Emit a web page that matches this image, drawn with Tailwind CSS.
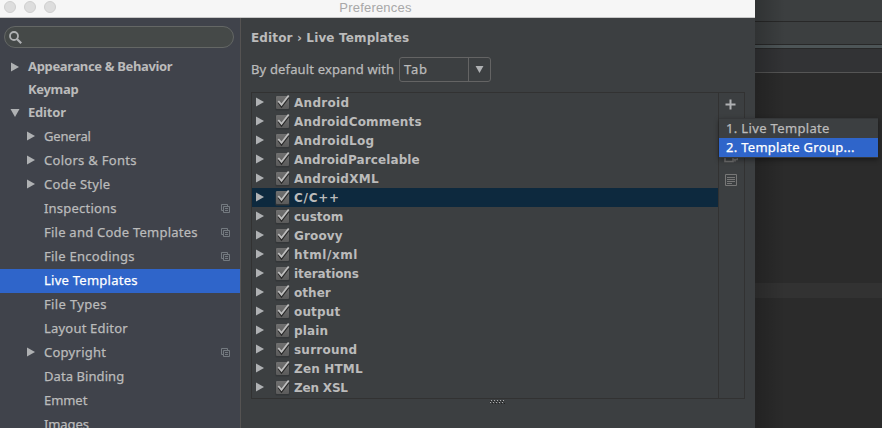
<!DOCTYPE html>
<html lang="en"><head><meta charset="utf-8"><title>Preferences</title>
<script src="https://cdn.jsdelivr.net/npm/@tailwindcss/browser@4"></script></head>
<body class="w-[882px] h-[428px] overflow-hidden bg-[#2b2b2b] text-[#bbbbbb] text-[13px] font-['Noto_Sans','Open_Sans',sans-serif]">
<svg class="absolute w-0 h-0">
<symbol id="right" viewBox="0 0 8 10"><path d="M0 .5 8 5 0 9.5Z" fill="#afb1b3"/></symbol>
<symbol id="down" viewBox="0 0 10 8"><path d="M.5 0H9.5L5 8Z" fill="#afb1b3"/></symbol>
<symbol id="copy" viewBox="0 0 9 9"><path d="M2 6.5H.5V.5H6.5V2M2.5 2.5H8.5V8.5H2.5ZM4 4.5H7M4 6.5H7" fill="none" stroke="#747a80"/></symbol>
<linearGradient id="box" x2="0" y2="1"><stop stop-color="#707070"/><stop offset="1" stop-color="#5b5b5b"/></linearGradient>
<symbol id="check" viewBox="0 0 16 17"><rect x=".5" y="2.5" width="14" height="14" rx="1" fill="#333638"/><rect x="1" y="2" width="13" height="13" rx="1" fill="url(#box)"/><path d="M3.5 8.5 6.5 12.5 13.5 3.5" fill="none" stroke="#292929" stroke-width="2"/><path d="M3.3 7 6.5 10.8 13.7 1.5" fill="none" stroke="#bebebe" stroke-width="1.8"/></symbol>
</svg>
<main class="relative flex h-[428px]">
<section class="w-[755px] h-[428px] shrink-0 bg-[#3c3f41] flex flex-col">
<header class="relative h-[18px] shrink-0 bg-[#f6f6f6] border-b border-[#c8c8c8] flex justify-center">
<div class="absolute left-1 top-px flex gap-2"><i class="size-3 rounded-full bg-[#dddddd] border border-[#cfcfcf]"></i><i class="size-3 rounded-full bg-[#dddddd] border border-[#cfcfcf]"></i><i class="size-3 rounded-full bg-[#dddddd] border border-[#cfcfcf]"></i></div>
<h1 class="font-['Liberation_Sans',sans-serif] text-[13px] leading-[15px] tracking-[0.2px] text-[#a8a8a8] pr-1">Preferences</h1></header>
<div class="flex flex-1 min-h-0">
<nav class="w-[241px] shrink-0 bg-[#40434b] border-r border-[#555352] overflow-hidden">
<div class="mt-2 ml-1 w-[230px] h-[22px] rounded-full border border-[#646765] bg-[#454948] flex items-center pl-1"><svg class="w-[13px] h-[13px]" viewBox="0 0 13 13" fill="none" stroke="#afb1b3"><circle cx="5" cy="5" r="4" stroke-width="1.8"/><path d="m8 8 4.2 4.2" stroke-width="2.2"/></svg></div>
<div id="side" class="mt-2"></div></nav>
<div class="flex-1 pl-[10px] flex flex-col">
<h2 class="h-5 mt-[10px] leading-5 font-bold text-[12px] font-['DejaVu_Sans',sans-serif] whitespace-pre"><span class="fit" data-w="157.5">Editor › Live Templates</span></h2>
<div class="flex h-[25px] mt-[9px] items-center"><span class="w-[148px] whitespace-nowrap [-webkit-text-stroke:0.25px]"><span class="fit" data-w="142.5">By default expand with</span></span>
<div class="w-[92px] h-[25px] border border-[#646464] rounded-[3px] flex items-center"><span class="w-[69px] h-full pl-1 leading-[23px] border-r border-[#646464] [-webkit-text-stroke:0.25px]"><span class="fit" data-w="23">Tab</span></span><svg class="ml-[6px] w-[9px] h-[7px]"><use href="#down"/></svg></div></div>
<div class="mt-[10px] w-[494px] h-[307px] border border-[#323232] flex"><div id="list" class="w-[466px]"></div>
<aside class="w-[26px] border-l border-[#323232] flex flex-col items-start pl-[6px]"><svg class="mt-[6px] w-[11px] h-[11px]" viewBox="0 0 11 11"><path d="M5.5 .5V10.5M.5 5.5H10.5" stroke="#afb1b3" stroke-width="2"/></svg>
<svg class="mt-[42px] -ml-px w-[14px] h-[11px]" viewBox="0 0 14 11"><path d="M1 2V9.5H9V6M9 7.5H13.5V2M11 7.5v2" fill="none" stroke="#6e6e6e" stroke-width="1.6"/></svg>
<svg class="mt-[11px] w-[12px] h-[12px]" viewBox="0 0 12 12"><path d="M.5 .5H11.5V11.5H.5ZM2 3.5H10M2 5.5H10M2 7.5H10M2 9.5H7" fill="none" stroke="#777"/></svg></aside></div>
<svg class="ml-[239px] mt-[1px] w-[15px] h-[4px]" viewBox="0 0 15 4"><path d="M1 .5H15M0 2.5H14" stroke="#aaa" stroke-dasharray="1 2"/><path d="M0 1.5H15M2 3.5H15" stroke="#222" stroke-dasharray="1 2"/></svg>
</div></div></section>
<section class="flex-1 flex flex-col">
<div class="h-[22px] bg-[#3c3f40] border-b border-[#282828]"></div><div class="h-[23px] bg-[#3c3f40] border-b border-[#282828]"></div><div class="h-[4px] bg-[#4d5557] border-b border-[#282828]"></div><div class="h-[24px] bg-[#323335] border-b border-[#555555]"></div><div class="h-[210px]"></div><div class="h-[15px] bg-[#323232]"></div>
</section>
<div class="absolute left-[755px] top-0 w-[30px] h-[428px] bg-linear-to-r from-black/20 to-transparent"></div>
<div class="absolute left-[719px] top-[118px] w-[159px] h-[40px] bg-[#3c3f41] border-t border-b border-[#353739] shadow-[0_2px_5px_rgba(0,0,0,0.4)] [-webkit-text-stroke:0.25px]"><div class="h-[19px] leading-[19px] pl-[7px]"><span class="fit" data-w="103">1. Live Template</span></div><div class="h-[19px] leading-[19px] pl-[7px] bg-[#2f65ca] text-white"><span class="fit" data-w="128">2. Template Group...</span></div></div>
</main>
<script>
const side=[["Appearance & Behavior",0,"right",143.5],["Keymap",0,"",49.5],["Editor",0,"down",37],["General",1,"right",46],["Colors & Fonts",1,"right",92],["Code Style",1,"right",65.5],["Inspections",1,"",72,1],["File and Code Templates",1,"",153,1],["File Encodings",1,"",90,1],["Live Templates",1,"",93,0,1],["File Types",1,"",62],["Layout Editor",1,"",83],["Copyright",1,"right",61.5,1],["Data Binding",1,"",79.5],["Emmet",1,"",42.5],["Images",1,"",44]];
document.getElementById('side').innerHTML=side.map(([t,l,a,w,c,s])=>`<div class="${l?'h-6 pl-[26px] [-webkit-text-stroke:0.25px]':'h-[23px] pl-[10px] font-bold text-[13px]'} flex items-center pr-[10px] ${s?'bg-[#2f65ca] text-white':''}"><span class="w-[18px] shrink-0">${a?`<svg class="${a=='down'?'w-[10px] h-[8px]':'w-[8px] h-[10px] ml-px'} mb-[2px]"><use href="#${a}"/></svg>`:''}</span><span class="flex-1 pb-px whitespace-nowrap"><span class="fit" data-w="${w}">${t.replace('&','&amp;')}</span></span>${c?'<svg class="w-[9px] h-[9px] mb-px"><use href="#copy"/></svg>':''}</div>`).join('');
const list=[["Android",54.5],["AndroidComments",127],["AndroidLog",79.5],["AndroidParcelable",125],["AndroidXML",84],["C/C++",45],["custom",48.5],["Groovy",48],["html/xml",63],["iterations",64],["other",36],["output",45.5],["plain",33.5],["surround",62.5],["Zen HTML",68],["Zen XSL",53]];
document.getElementById('list').innerHTML=list.map(([t,w])=>`<div class="h-[19px] flex items-center font-bold text-[12px] font-['DejaVu_Sans',sans-serif] ${t=='C/C++'?'bg-[#0d293e]':''}"><svg class="ml-1 mb-px w-[8px] h-[10px]"><use href="#right"/></svg><svg class="ml-[11px] mr-[3px] w-[16px] h-[17px]"><use href="#check"/></svg><span class="leading-[18px] whitespace-nowrap"><span class="fit" data-w="${w}">${t}</span></span></div>`).join('');
// Keep label widths stable across fallback fonts, once styles are in place
function fit(){document.querySelectorAll('.fit').forEach(e=>{e.style.whiteSpace='pre';e.style.letterSpacing='0px';const n=e.textContent.length;e.style.letterSpacing=((+e.dataset.w+.8-e.getBoundingClientRect().width)/n)+'px'})}
fit();addEventListener('load',fit);new ResizeObserver(fit).observe(document.querySelector('main'));
</script>
</body></html>
